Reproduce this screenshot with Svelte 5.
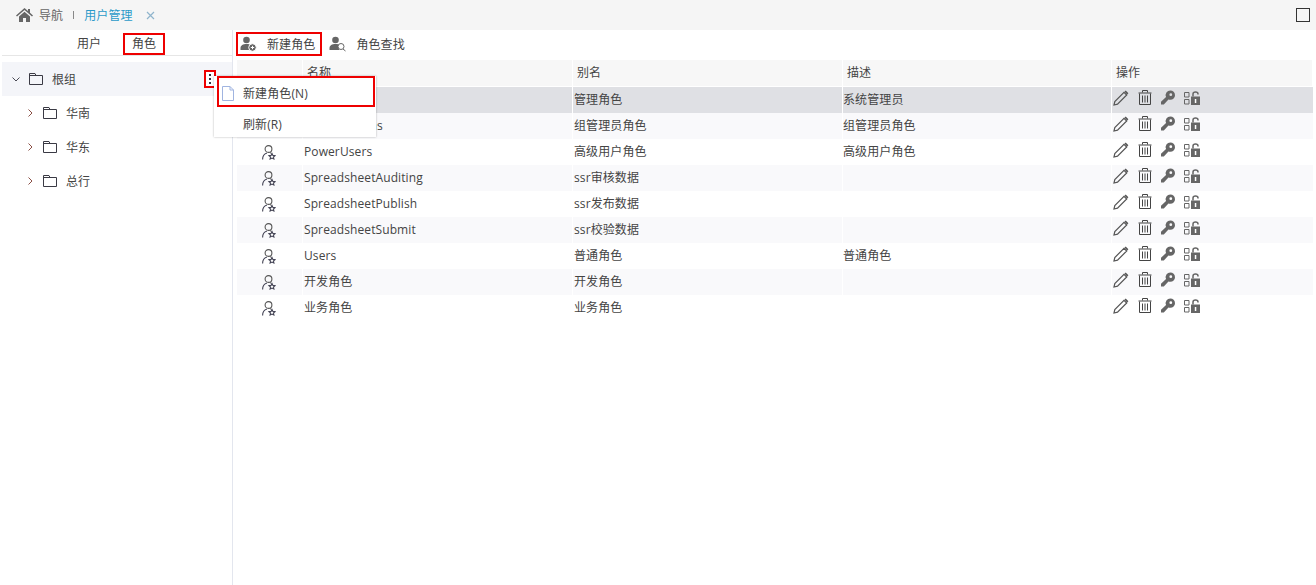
<script>
	const roles = [
		{ name: 'Admin', alias: '管理角色', desc: '系统管理员' },
		{ name: 'GroupAdmins', alias: '组管理员角色', desc: '组管理员角色' },
		{ name: 'PowerUsers', alias: '高级用户角色', desc: '高级用户角色' },
		{ name: 'SpreadsheetAuditing', alias: 'ssr审核数据', desc: '' },
		{ name: 'SpreadsheetPublish', alias: 'ssr发布数据', desc: '' },
		{ name: 'SpreadsheetSubmit', alias: 'ssr校验数据', desc: '' },
		{ name: 'Users', alias: '普通角色', desc: '普通角色' },
		{ name: '开发角色', alias: '开发角色', desc: '' },
		{ name: '业务角色', alias: '业务角色', desc: '' }
	];
	const groups = ['华南', '华东', '总行'];
</script>

{#snippet folder()}
	<svg class="folder" width="14" height="12" viewBox="0 0 14 12">
		<path d="M.5 11.500V.5h5.500l1 2h6.500v9z M.5 2.500h6.500" fill="none" stroke="#3a3a44" />
	</svg>
{/snippet}

{#snippet person(badge)}
	<svg width="17" height="16" viewBox="0 0 17 16">
		<circle cx="6.500" cy="4" r="3.300" fill="#666" />
		<path d="M.5 14v-2c0-2.500 2.500-4 6-4 2 0 3.500.4 4.500 1.300L10 14z" fill="#666" />
		{#if badge === 'add'}
			<circle cx="12.500" cy="11.500" r="3.800" fill="#666" stroke="#fff" />
			<path d="M10.800 11.500h3.400M12.500 9.800v3.400" stroke="#fff" />
		{:else}
			<circle cx="12" cy="10.500" r="3" fill="#fff" stroke="#666" />
			<path d="M14 13l2.500 2" stroke="#666" />
		{/if}
	</svg>
{/snippet}

<div class="tabbar">
	<svg class="home" width="17" height="14" viewBox="0 0 17 14">
		<path d="M8.500 0L0 7.500l1 1 7.500-6.500 7.500 6.500 1-1-3-2.700V1h-2v2z" fill="#666" />
		<path d="M3 8.500L8.500 3.700 14 8.500V14h-4v-4H7v4H3z" fill="#666" />
	</svg>
	<span class="nav">导航</span>
	<span class="sep"></span>
	<span class="current">用户管理</span>
	<svg class="close" width="9" height="9" viewBox="0 0 9 9">
		<path d="M1 1l7 7M8 1L1 8" stroke="#8fb4cc" stroke-width="1.200" />
	</svg>
	<span class="maximize"></span>
</div>

<div class="main">
	<aside>
		<div class="tabs">
			<span class="tab">用户</span>
			<span class="tab marked">角色</span>
		</div>
		<div class="tree">
			<div class="node root">
				<svg class="caret" width="8" height="5" viewBox="0 0 8 5">
					<path d="M.5.500L4 4 7.500.500" fill="none" stroke="#4a4a55" />
				</svg>
				{@render folder()}
				<span>根组</span>
				<span class="dots"><i></i><i></i><i></i></span>
			</div>
			{#each groups as g}
				<div class="node child">
					<svg class="caret" width="5" height="8" viewBox="0 0 5 8">
						<path d="M.5.500L4 4 .5 7.500" fill="none" stroke="#8a4f45" />
					</svg>
					{@render folder()}
					<span>{g}</span>
				</div>
			{/each}
		</div>
	</aside>

	<section>
		<div class="toolbar">
			<button class="tool marked">{@render person('add')}<span>新建角色</span></button>
			<button class="tool">{@render person('find')}<span>角色查找</span></button>
		</div>
		<div class="table">
			<div class="row head">
				<div></div>
				<div>名称</div>
				<div>别名</div>
				<div>描述</div>
				<div>操作</div>
			</div>
			{#each roles as r, i}
				<div class="row" class:selected={i === 0} class:odd={i % 2 === 1}>
					<div class="icon">
						<svg width="14" height="15" viewBox="0 0 14 15">
							<circle cx="6.500" cy="4" r="3.400" fill="none" stroke="#555" stroke-width="1.100" />
							<path d="M.6 14.500c0-3.500 1.900-5.800 4.400-6.500" fill="none" stroke="#445" stroke-width="1.100" />
							<path d="M8 7.800c.7.100 1.200.3 1.700.6" fill="none" stroke="#555" />
							<path d="M10 8.500l.9 1.900 2.100.2-1.500 1.400.4 2-1.900-1-1.900 1 .4-2-1.500-1.400 2.100-.2z" fill="#fff" stroke="#445" stroke-width="1.100" />
						</svg>
					</div>
					<div>{r.name}</div>
					<div>{r.alias}</div>
					<div>{r.desc}</div>
					<div class="ops">
						<svg width="16" height="16" viewBox="0 0 16 16">
							<path d="M1 15l.8-3.500L11 2.300l2.700 2.700L4.500 14.200z" fill="none" stroke="#555" stroke-width="1.200" />
							<path d="M11.500 1.800l1.200-1.200 2.700 2.700-1.200 1.200z" fill="#555" />
						</svg>
						<svg width="14" height="15" viewBox="0 0 14 15">
							<path d="M.5 3h13M4.500 2.500V.5h5v2" fill="none" stroke="#444" />
							<path d="M1.500 3.500v11h11v-11M4.500 5.500v7M7 5.500v7M9.500 5.500v7" fill="none" stroke="#444" />
						</svg>
						<svg width="14" height="15" viewBox="0 0 15 15">
							<path d="M10 0a5 5 0 0 1 0 10 5 5 0 0 1-2-.4L3 15H0v-3L5.400 7A5 5 0 0 1 10 0zm.5 3a1.500 1.500 0 1 0 0 3 1.500 1.500 0 0 0 0-3z" fill="#666" fill-rule="evenodd" />
						</svg>
						<svg width="16" height="14" viewBox="0 0 16 14">
							<path d="M.5 1.500h4.500V6H.5zM.5 8.500h4.500V13H.5z" fill="none" stroke="#666" />
							<path d="M7 5.500h9V14H7z" fill="#666" />
							<path d="M9 5.500V3c0-2.600 5-2.600 5 0v.5" fill="none" stroke="#666" stroke-width="1.500" />
							<path d="M10.800 8h1.500v4h-1.500z" fill="#fff" />
						</svg>
					</div>
				</div>
			{/each}
		</div>
	</section>
</div>

<div class="menu">
	<div class="item first">
		<svg width="12" height="15" viewBox="0 0 12 15">
			<path d="M.5.500h7.500l3.500 3.500v10.500H.5z M8 .5V4h3.500" fill="none" stroke="#a0b4e0" />
		</svg>
		<span>新建角色(N)</span>
	</div>
	<div class="item"><span>刷新(R)</span></div>
</div>

<style>
	:global(body) {
		background: #fff;
		overflow: hidden;
	}

	:global(#app) {
		font-family: 'Open Sans', 'Noto Sans CJK SC', sans-serif;
		font-size: 12px;
		letter-spacing: 0.1px;
		color: #444;
		position: relative;
		height: 585px;
	}

	.tabbar {
		display: flex;
		align-items: center;
		height: 30px;
		padding: 0 6px 0 16px;
		background: #f5f5f5;
		box-sizing: border-box;
	}

	.nav {
		margin-left: 6px;
		color: #666;
	}

	.sep {
		width: 1px;
		height: 8px;
		margin: 0 10px 0 10px;
		background: #888;
	}

	.current {
		color: #2a9ac9;
	}

	.close {
		margin-left: 13px;
	}

	.maximize {
		width: 14px;
		height: 14px;
		margin-left: auto;
		box-sizing: border-box;
		border: 1px solid #333;
	}

	.main {
		display: flex;
		height: 555px;
	}

	aside {
		width: 233px;
		flex: none;
		box-sizing: border-box;
		border-right: 1px solid #e3e6ee;
		padding-left: 2px;
	}

	.tabs {
		display: flex;
		align-items: flex-end;
		height: 26px;
		padding-left: 66px;
		gap: 13px;
		box-sizing: border-box;
		border-bottom: 1px solid #e6e6e6;
	}

	.tab {
		width: 42px;
		height: 22px;
		line-height: 18px;
		text-align: center;
		box-sizing: border-box;
		border: 2px solid transparent;
	}

	.marked {
		border: 2px solid #ee0000;
	}

	.tree {
		padding-top: 6px;
	}

	.node {
		display: flex;
		align-items: center;
		height: 34px;
	}

	.root {
		background: #f4f5f9;
		padding-left: 10px;
	}

	.child {
		padding-left: 26px;
	}

	.folder {
		margin: 0 9px;
	}

	.child .folder {
		margin-left: 10px;
	}

	.dots {
		display: flex;
		flex-direction: column;
		align-items: center;
		justify-content: space-evenly;
		width: 12px;
		height: 18px;
		box-sizing: border-box;
		margin-left: auto;
		margin-right: 16px;
		border: 2px solid #ee0000;
		background: #fff;
	}

	.dots i {
		width: 2px;
		height: 2px;
		background: #334;
	}

	section {
		flex: 1;
		padding: 0 3px;
		min-width: 0;
	}

	.toolbar {
		display: flex;
		height: 30px;
		padding-top: 2px;
		box-sizing: border-box;
		align-items: flex-start;
		gap: 3px;
	}

	.tool {
		display: flex;
		align-items: center;
		gap: 10px;
		height: 24px;
		padding: 0 5px 0 2px;
		font: inherit;
		letter-spacing: inherit;
		color: inherit;
		background: none;
		border: 2px solid transparent;
		box-sizing: border-box;
	}

	.tool.marked {
		border-color: #ee0000;
	}

	.table {
		margin-left: 1px;
	}

	.row {
		display: grid;
		grid-template-columns: 66px 270px 270px 269px 1fr;
		height: 26px;
		line-height: 26px;
	}

	.row > div {
		padding-left: 1px;
		margin-right: 1px;
		white-space: nowrap;
		overflow: hidden;
	}

	.row:not(.head) > div:nth-child(4) {
		padding-left: 0;
	}

	.head {
		margin-bottom: 1px;
	}

	.head > div {
		background: #f7f7f7;
		padding-left: 4px;
	}

	.odd > div {
		background: #f9f9fb;
	}

	.row.selected > div {
		background: #dfe0e4;
	}

	.icon {
		display: flex;
		align-items: center;
		justify-content: center;
		padding: 0 2px 0 0 !important;
	}

	.ops {
		display: flex;
		align-items: center;
		gap: 9px;
		margin-right: 0 !important;
		padding-bottom: 5px;
		box-sizing: border-box;
	}

	.menu {
		position: absolute;
		left: 214px;
		top: 76px;
		width: 162px;
		height: 61px;
		box-sizing: border-box;
		background: #fff;
		box-shadow: 0 0 2px rgba(0, 0, 0, 0.3);
	}

	.item {
		display: flex;
		align-items: center;
		height: 30px;
		padding: 4px 0 0 29px;
		box-sizing: border-box;
	}

	.item.first {
		margin-left: 3px;
		padding: 3px 0 0 3px;
		gap: 9px;
		width: 158px;
		height: 31px;
		border: 2px solid #ee0000;
	}
</style>
